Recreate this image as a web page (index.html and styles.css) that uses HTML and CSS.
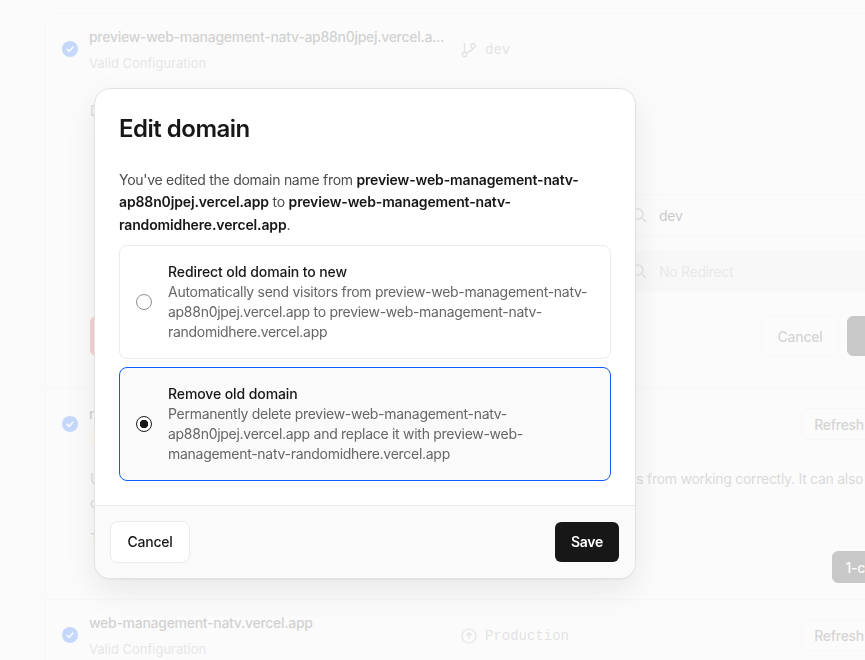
FILE: index.html
```html
<!DOCTYPE html>
<html lang="en">
<head>
<meta charset="utf-8">
<title>Edit domain</title>
<link rel="stylesheet" href="styles.css">
</head>
<body>
<main class="card">
  <section class="row row-first">
    <div class="row-head">
      <svg class="check" viewBox="0 0 16 16"><circle cx="8" cy="8" r="8" fill="#0a5cff"/><path d="M5 8.300l2.100 2.100L11 6" fill="none" stroke="#fff" stroke-width="1.5" stroke-linecap="round" stroke-linejoin="round"/></svg>
      <div class="names">
        <div class="name">preview-web-management-natv-ap88n0jpej.vercel.a...</div>
        <div class="status">Valid Configuration</div>
      </div>
      <div class="env">
        <svg class="env-icon" viewBox="0 0 16 16" fill="none" stroke="currentColor" stroke-width="1.4"><circle cx="3.500" cy="12.500" r="2.200"/><circle cx="12" cy="4" r="2.200"/><path d="M3.500 1v9M12 6.200c0 3-4 2.300-6 5"/></svg>
        <span class="mono">dev</span>
      </div>
    </div>
    <div class="label">Domain</div>
    <div class="fields">
      <div class="field">
        <svg class="search" viewBox="0 0 16 16" fill="none" stroke="currentColor" stroke-width="1.400"><circle cx="7" cy="7" r="5"/><path d="M11 11l4 4"/></svg>
        <span>dev</span>
      </div>
      <div class="field field-off">
        <svg class="search" viewBox="0 0 16 16" fill="none" stroke="currentColor" stroke-width="1.400"><circle cx="7" cy="7" r="5"/><path d="M11 11l4 4"/></svg>
        <span>No Redirect</span>
      </div>
    </div>
    <div class="actions">
      <button class="btn btn-danger" type="button">Remove</button>
      <span class="spacer"></span>
      <button class="btn btn-ghost btn-cancel" type="button">Cancel</button>
      <button class="btn btn-dark btn-save" type="button">Save</button>
    </div>
  </section>

  <section class="row">
    <div class="row-head">
      <svg class="check" viewBox="0 0 16 16"><circle cx="8" cy="8" r="8" fill="#0a5cff"/><path d="M5 8.300l2.100 2.100L11 6" fill="none" stroke="#fff" stroke-width="1.5" stroke-linecap="round" stroke-linejoin="round"/></svg>
      <div class="names">
        <div class="name">natv.example.com</div>
        <div class="badge">Recommended</div>
      </div>
      <span class="spacer"></span>
      <button class="btn btn-ghost btn-small btn-refresh" type="button">Refresh</button>
    </div>
    <p class="note">Updating the domain's configuration is recommended, as it may prevent some services from working correctly. It can also cause outages for your visitors.</p>
    <p class="fix-text">This can be fixed automatically.</p>
    <div class="fix-row">
      <button class="btn btn-dark btn-small btn-fix" type="button">1-click Fix</button>
    </div>
  </section>

  <section class="row row-last">
    <div class="row-head">
      <svg class="check" viewBox="0 0 16 16"><circle cx="8" cy="8" r="8" fill="#0a5cff"/><path d="M5 8.300l2.100 2.100L11 6" fill="none" stroke="#fff" stroke-width="1.5" stroke-linecap="round" stroke-linejoin="round"/></svg>
      <div class="names">
        <div class="name">web-management-natv.vercel.app</div>
        <div class="status">Valid Configuration</div>
      </div>
      <div class="env">
        <svg class="env-icon" viewBox="0 0 16 16" fill="none" stroke="currentColor" stroke-width="1.200"><circle cx="8" cy="8" r="7"/><path d="M8 11.500V5M5.300 7.500L8 4.800l2.700 2.700"/></svg>
        <span class="mono">Production</span>
      </div>
      <span class="spacer"></span>
      <button class="btn btn-ghost btn-small btn-refresh" type="button">Refresh</button>
    </div>
  </section>
</main>

<div class="scrim"></div>

<div class="modal" role="dialog" aria-labelledby="modal-title">
  <div class="modal-body">
    <h2 class="modal-title" id="modal-title">Edit domain</h2>
    <p class="modal-text">You've edited the domain name from <strong>preview-web-management-natv-ap88n0jpej.vercel.app</strong> to <strong>preview-web-management-natv-randomidhere.vercel.app</strong>.</p>
    <div class="options">
      <label class="option">
        <span class="radio"></span>
        <span class="option-copy">
          <span class="option-title">Redirect old domain to new</span>
          <span class="option-desc">Automatically send visitors from preview-web-management-natv-ap88n0jpej.vercel.app to preview-web-management-natv-randomidhere.vercel.app</span>
        </span>
      </label>
      <label class="option option-on">
        <span class="radio radio-on"></span>
        <span class="option-copy">
          <span class="option-title">Remove old domain</span>
          <span class="option-desc">Permanently delete preview-web-management-natv-ap88n0jpej.vercel.app and replace it with preview-web-management-natv-randomidhere.vercel.app</span>
        </span>
      </label>
    </div>
  </div>
  <div class="modal-foot">
    <button class="modal-cancel" type="button">Cancel</button>
    <button class="modal-save" type="button">Save</button>
  </div>
</div>
</body>
</html>
```

FILE: styles.css
```css
* { box-sizing: border-box; }
html, body { height: 100%; }
body {
  margin: 0;
  height: 660px;
  overflow: hidden;
  background: #fafafa;
  font-family: Inter, "Liberation Sans", sans-serif;
  font-size: 14px;
  letter-spacing: -.28px;
  color: #171717;
  padding: 13px 0 0 45px;
}
button { font: inherit; letter-spacing: inherit; }

.card {
  width: 1000px;
  background: #fff;
  border: 1px solid #ebebeb;
  border-radius: 8px;
}
.row { height: 211px; padding: 10px 16px 0; border-bottom: 1px solid #ebebeb; }
.row-first { height: 375px; }
.row-last { height: 80px; border-bottom: 0; }

.row-head { display: flex; align-items: center; height: 50px; }
.check { width: 16px; height: 16px; flex: none; margin-right: 11px; }
.names { width: 372px; flex: none; margin-top: 2px; }
.name { font-weight: 450; color: #404040; line-height: 24px; }
.status { color: #999; line-height: 24px; margin-top: 2px; font-size: 13px; letter-spacing: 0; }
.badge {
  display: inline-block;
  color: #a35200;
  background: #fff4d6;
  border-radius: 12px;
  font-size: 12px;
  line-height: 20px;
  padding: 0 8px;
  margin-top: 3px;
}
.env { display: flex; align-items: center; gap: 8px; color: #8f8f8f; margin-top: 1px; }
.env-icon { width: 16px; height: 16px; flex: none; }
.mono { font-family: "Liberation Mono", "DejaVu Sans Mono", monospace; font-size: 14px; letter-spacing: 0; }

.label { margin: 25px 0 0 28px; line-height: 24px; color: #666; }
.fields {
  display: flex;
  flex-direction: column;
  gap: 14px;
  margin: 71px 0 0 400px;
}
.field {
  display: flex;
  align-items: center;
  gap: 12px;
  height: 42px;
  padding-left: 168px;
  border: 1px solid #ebebeb;
  border-radius: 6px;
  color: #171717;
}
.field-off { background: #f2f2f2; color: #a8a8a8; border-color: #f2f2f2; }
.search { width: 16px; height: 16px; flex: none; color: #8f8f8f; }

.actions { display: flex; align-items: center; gap: 8px; margin: 24px 0 0 28px; }
.spacer { flex: 1; }
.btn {
  height: 40px;
  border-radius: 6px;
  padding: 0 16px;
  font-weight: 500;
  border: 1px solid #ebebeb;
  background: #fff;
  color: #171717;
}
.btn-danger { background: #e5484d; color: #fff; border-color: #e5484d; width: 100px; }
.btn-ghost { color: #4d4d4d; }
.btn-dark { background: #171717; color: #fff; border-color: #171717; }
.btn-cancel { width: 78px; padding: 0; }
.btn-save { width: 70px; margin-right: 111px; }
.btn-small { height: 32px; padding: 0 12px; }
.btn-refresh { margin-right: 151px; }

.note { margin: 18px 0 0 28px; width: 785px; line-height: 24px; color: #666; }
.fix-text { margin: 12px 0 0 28px; line-height: 24px; color: #666; }
.fix-row { display: flex; justify-content: flex-end; }
.btn-fix { margin-right: 106px; }

.scrim { position: fixed; inset: 0; background: rgba(250, 250, 250, .78); }

.modal {
  position: fixed;
  left: 94px;
  top: 88px;
  width: 542px;
  height: 491px;
  display: flex;
  flex-direction: column;
  background: #fff;
  border: 1px solid #e2e2e2;
  border-radius: 16px;
  overflow: hidden;
  box-shadow: 0 1px 1px rgba(0,0,0,.04), 0 12px 32px rgba(0,0,0,.08);
}
.modal-body { flex: 1; padding: 24px 24px 0; }
.modal-title { margin: 0; font-size: 24px; line-height: 32px; font-weight: 600; letter-spacing: -.5px; color: #171717; }
.modal-text { margin: 24px 0 0; line-height: 22.400px; color: #4d4d4d; }
.modal-text strong { color: #171717; font-weight: 600; letter-spacing: -.14px; }
.options { display: flex; flex-direction: column; gap: 8px; margin-top: 9px; }
.option {
  display: flex;
  align-items: center;
  gap: 16px;
  height: 114px;
  padding: 0 16px;
  border: 1px solid #ebebeb;
  border-radius: 8px;
}
.option-on { background: #fafafa; border-color: #0a5cff; }
.radio {
  width: 16px;
  height: 16px;
  flex: none;
  border: 1px solid #8f8f8f;
  border-radius: 50%;
  background: #fff;
}
.radio-on {
  border: 1.5px solid #171717;
  background: radial-gradient(circle, #171717 0 4px, #fff 4.500px);
}
.option-copy { display: flex; flex-direction: column; }
.option-title { line-height: 20px; font-weight: 500; color: #171717; letter-spacing: -.1px; }
.option-desc { line-height: 20px; color: #666; }

.modal-foot {
  display: flex;
  justify-content: space-between;
  align-items: center;
  height: 73px;
  padding: 0 16px 1px 15px;
  background: #fafafa;
  border-top: 1px solid #ebebeb;
}
.modal-cancel {
  width: 80px;
  height: 42px;
  border: 1px solid #ebebeb;
  border-radius: 8px;
  background: #fff;
  color: #171717;
  font-weight: 500;
}
.modal-save {
  width: 64px;
  height: 40px;
  border: 0;
  border-radius: 6px;
  background: #171717;
  color: #fff;
  font-weight: 600;
}
```
